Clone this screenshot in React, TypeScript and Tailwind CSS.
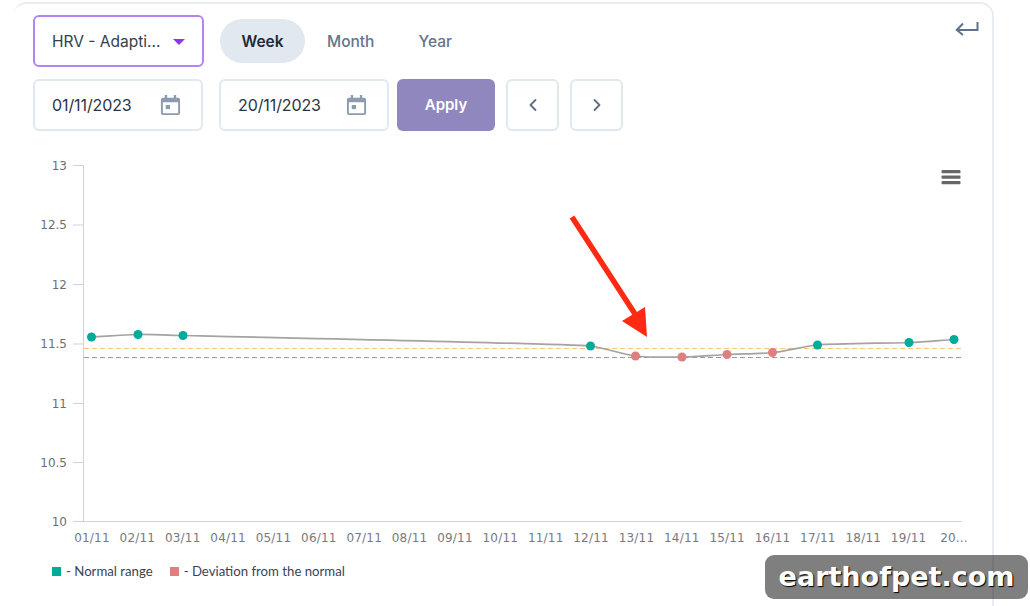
import React from 'react';
import { ChevronLeft, ChevronRight } from 'lucide-react';

const dates = ['01/11', '02/11', '03/11', '04/11', '05/11', '06/11', '07/11', '08/11', '09/11', '10/11', '11/11', '12/11', '13/11', '14/11', '15/11', '16/11', '17/11', '18/11', '19/11', '20...'];
const yTicks = [
  { label: '13', y: 165 },
  { label: '12.5', y: 224.5 },
  { label: '12', y: 284 },
  { label: '11.5', y: 343.5 },
  { label: '11', y: 403 },
  { label: '10.5', y: 462 },
  { label: '10', y: 521 },
];
const points = [
  { x: 91.5, y: 337, ok: true },
  { x: 138, y: 334.5, ok: true },
  { x: 183, y: 335.5, ok: true },
  { x: 590.5, y: 346, ok: true },
  { x: 635.5, y: 356, ok: false },
  { x: 682, y: 357, ok: false },
  { x: 727, y: 354.5, ok: false },
  { x: 772.5, y: 352.5, ok: false },
  { x: 817.5, y: 345, ok: true },
  { x: 909, y: 342.5, ok: true },
  { x: 954, y: 339.5, ok: true },
];

const TEAL = '#00ab9a';
const ROSE = '#df7f7f';

// Smooth line through the points, tangents from the neighbouring slopes
const slope = (a: { x: number; y: number }, b: { x: number; y: number }) => (b.y - a.y) / (b.x - a.x);
const tangent = (i: number) => {
  if (i === 0) return slope(points[0], points[1]);
  if (i === points.length - 1) return slope(points[i - 1], points[i]);
  return (slope(points[i - 1], points[i]) + slope(points[i], points[i + 1])) / 2;
};
const linePath = points.reduce((d, p, i) => {
  if (i === 0) return `M${p.x} ${p.y}`;
  const prev = points[i - 1];
  const dx = Math.min(p.x - prev.x, 45) / 3;
  return `${d} C${prev.x + dx} ${prev.y + tangent(i - 1) * dx} ${p.x - dx} ${p.y - tangent(i) * dx} ${p.x} ${p.y}`;
}, '');

// Calendar glyph used in both date inputs
const CalendarIcon = () => (
  <svg width="21" height="22" viewBox="0 0 22 24" className="shrink-0" preserveAspectRatio="none">
    <path d="M5 1h2.5v3h7V1H17v3h2a2 2 0 0 1 2 2v15a2 2 0 0 1-2 2H3a2 2 0 0 1-2-2V6a2 2 0 0 1 2-2h2z" fill="#8c9cb0" />
    <rect x="3" y="9" width="16" height="12" fill="#fff" />
    <rect x="6" y="12" width="4.5" height="4.5" fill="#8c9cb0" />
  </svg>
);

const DateInput = ({ value }: { value: string }) => (
  <div className="flex h-[52px] w-[170px] items-center justify-between rounded-md border-2 border-[#e2e8f0] pl-[17px] pr-[20px] text-[16px] text-[#2b3444]">
    <span className="tracking-[-0.1px]">{value}</span>
    <CalendarIcon />
  </div>
);

const NavButton = ({ children }: { children: React.ReactNode }) => (
  <button className="flex h-[52px] w-[53px] items-center justify-center rounded-md border-2 border-[#e2e8f0] text-[#5c6f86]">
    {children}
  </button>
);

const Chart = () => (
  <svg width="940" height="411" viewBox="33 150 940 411" className="block" style={{ fontFamily: '"DejaVu Sans", sans-serif' }}>
    {yTicks.map((t) => (
      <g key={t.label}>
        <line x1="73" x2="83" y1={t.y + 0.5} y2={t.y + 0.5} stroke="#cfd3d8" />
        <text x="67" y={t.y + 4.5} textAnchor="end" fontSize="12" fill="#6b6f75">{t.label}</text>
      </g>
    ))}
    <line x1="83.5" x2="83.5" y1="165" y2="521" stroke="#cfd3d8" />
    <line x1="73" x2="962" y1="521.5" y2="521.5" stroke="#cfd3d8" />
    {dates.map((d, i) => (
      <text key={d} x={92 + i * 45.37} y="542" textAnchor="middle" fontSize="12" letterSpacing="0.2" fill="#77797f">{d}</text>
    ))}
    <line x1="84" x2="962" y1="348.5" y2="348.5" stroke="#fdc676" strokeWidth="1.2" strokeDasharray="5 3" />
    <line x1="84" x2="962" y1="357.5" y2="357.5" stroke="#e27d7d" strokeWidth="1.2" strokeDasharray="5 3" />
    <path d={linePath} fill="none" stroke="#a3a3a3" strokeWidth="1.7" />
    {points.map((p) => (
      <circle key={p.x} cx={p.x} cy={p.y} r="4.5" fill={p.ok ? TEAL : ROSE} />
    ))}
    {/* export menu */}
    <g fill="#666">
      <rect x="941.5" y="170" width="19" height="3.2" rx="1" />
      <rect x="941.5" y="175.5" width="19" height="3.2" rx="1" />
      <rect x="941.5" y="181" width="19" height="3.2" rx="1" />
    </g>
    {/* red annotation arrow */}
    <line x1="572" y1="217" x2="635" y2="314" stroke="#ff2a14" strokeWidth="5.5" />
    <polygon points="645,307 647,337 622,321" fill="#ff2a14" />
  </svg>
);

export default function App() {
  return (
    <div className="relative h-[606px] w-[1030px] overflow-hidden bg-white" style={{ fontFamily: 'Inter, sans-serif' }}>
      <div className="ml-[13px] mt-[2px] h-[604px] w-[981px] rounded-t-[14px] border-r-2 border-t-2 border-[#e9edf2] pl-[20px] pt-[11px]">
        <div className="flex items-center">
          <div className="flex h-[52px] w-[171px] items-center justify-between rounded-md border-2 border-[#b383ee] pl-[17px] pr-[17px] pt-[2px] text-[15.5px] text-[#343d4e]">
            <span>HRV - Adapti...</span>
            <span className="h-0 w-0 border-x-[6px] border-t-[6px] border-x-transparent border-t-[#9333ea]" />
          </div>
          <div className="ml-[16px] flex h-[44px] w-[85px] items-center justify-center rounded-full bg-[#e2e8f0] pt-[2px] text-[15.5px] font-semibold text-[#1f2937]">Week</div>
          <div className="ml-[22px] pt-[2px] text-[15.5px] font-medium text-[#64748b]">Month</div>
          <div className="ml-[44px] pt-[2px] text-[15.5px] font-medium text-[#64748b]">Year</div>
          <svg width="24" height="16" viewBox="0 0 24 16" className="ml-auto mr-[13px] -mt-[27px]" fill="none" stroke="#5f7287" strokeWidth="2">
            <path d="M22.5 2v8H2" />
            <path d="M8 3.5 1.8 10 8 15" />
          </svg>
        </div>
        <div className="mt-[12px] flex items-center">
          <DateInput value="01/11/2023" />
          <div className="ml-[16px]"><DateInput value="20/11/2023" /></div>
          <button className="ml-[8px] h-[52px] w-[98px] rounded-md bg-[#9087bf] text-[15px] font-semibold text-white">Apply</button>
          <div className="ml-[11px]"><NavButton><ChevronLeft size={20} strokeWidth={2.2} /></NavButton></div>
          <div className="ml-[11px]"><NavButton><ChevronRight size={20} strokeWidth={2.2} /></NavButton></div>
        </div>
        <div className="mt-[19px]"><Chart /></div>
        <div className="ml-[19px] mt-[1px] flex items-center text-[13.2px] text-[#3a4356]" style={{ fontFamily: 'Lato, sans-serif' }}>
          <span className="h-[9px] w-[9px] bg-[#00ab9a]" />
          <span className="ml-[5px]">- Normal range</span>
          <span className="ml-[17px] h-[9px] w-[9px] bg-[#df7f7f]" />
          <span className="ml-[5px]">- Deviation from the normal</span>
        </div>
      </div>
      {/* watermark */}
      <div className="absolute left-[765px] top-[555px] flex h-[44px] w-[263px] items-center justify-center rounded-[9px] bg-black/50 text-[27px] font-bold text-white" style={{ fontFamily: '"DejaVu Sans", sans-serif', textShadow: '1px 1px 1px #000' }}>
        earthofpet.com
      </div>
    </div>
  );
}
